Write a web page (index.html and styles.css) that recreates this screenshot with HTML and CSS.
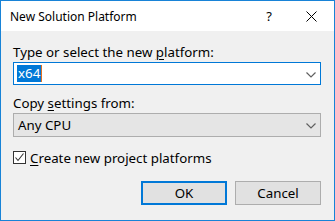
FILE: index.html
```html
<!DOCTYPE html>
<html>
<head>
<meta charset="utf-8">
<link rel="stylesheet" href="styles.css">
</head>
<body>
<div class="window">
  <div class="titlebar">
    <span class="title">New Solution Platform</span>
    <span class="help">?</span>
    <span class="close">
      <svg width="11" height="11" viewBox="0 0 11 11"><path d="M0.5 0.5 L10.5 10.5 M10.5 0.5 L0.5 10.5" stroke="#000" stroke-width="1" fill="none"/></svg>
    </span>
  </div>
  <div class="content">
    <div class="label label-first">Type or select the new <u>p</u>latform:</div>
    <div class="combo combo-edit">
      <span class="sel">x64</span><span class="caret"></span>
      <svg class="chev" width="10" height="6" viewBox="0 0 10 6"><path d="M0.5 0.5 L5 5 L9.5 0.5" stroke="#606060" stroke-width="1.2" fill="none"/></svg>
    </div>
    <div class="label label-second">Copy <u>s</u>ettings from:</div>
    <div class="combo combo-drop">
      <span class="val">Any CPU</span>
      <svg class="chev" width="10" height="6" viewBox="0 0 10 6"><path d="M0.5 0.5 L5 5 L9.5 0.5" stroke="#606060" stroke-width="1.2" fill="none"/></svg>
    </div>
    <div class="check-row">
      <span class="checkbox">
        <svg width="11" height="11" viewBox="0 0 11 11"><path d="M1.5 5.5 L4 8.5 L9.5 1.5" stroke="#333" stroke-width="1.1" fill="none"/></svg>
      </span>
      <span class="check-label"><u>C</u>reate new project platforms</span>
    </div>
    <div class="buttons">
      <button class="btn btn-default">OK</button>
      <button class="btn">Cancel</button>
    </div>
  </div>
</div>
</body>
</html>
```
FILE: styles.css
```css
* { box-sizing: border-box; }
html, body { margin: 0; padding: 0; }
body {
  width: 335px;
  height: 221px;
  font-family: "Noto Sans", "Open Sans", sans-serif;
  font-size: 12px;
  color: #000;
  background: #fff;
}
.window {
  width: 335px;
  height: 221px;
  border: 1px solid #1883d7;
  background: #f0f0f0;
  display: flex;
  flex-direction: column;
}
.titlebar {
  height: 30px;
  background: #fff;
  display: flex;
  align-items: center;
  padding-left: 9px;
  flex: none;
}
.title { flex: 1; font-size: 12px; }
.help { width: 12px; margin-right: 31px; text-align: center; font-size: 13px; }
.close { width: 11px; margin-right: 17px; display: flex; }
.content {
  padding: 0 13px 0 12px;
  display: flex;
  flex-direction: column;
  font-size: 13.3px;
}
.label { height: 15px; line-height: 15px; }
.label-first { margin-top: 14px; margin-bottom: 2px; }
.label-second { margin-top: 11px; margin-bottom: 2px; }
u { text-decoration-thickness: 1px; text-underline-offset: 2px; }
.combo {
  height: 23px;
  display: flex;
  align-items: center;
  position: relative;
}
.combo-edit {
  border: 1px solid #0078d7;
  background: #fff;
  padding-left: 3px;
}
.sel {
  background: #0078d7;
  color: #fff;
  height: 17px;
  line-height: 17px;
  padding: 0 1px;
}
.caret {
  width: 1px;
  height: 17px;
  background: #e07020;
}
.chev { position: absolute; right: 4px; top: 9px; }
.combo-drop {
  height: 24px;
  border: 1px solid #adadad;
  background: #e5e5e5;
  padding-left: 4px;
}
.combo-drop .chev { top: 9px; }
.check-row {
  display: flex;
  align-items: center;
  margin-top: 14px;
  height: 13px;
}
.checkbox {
  width: 13px;
  height: 13px;
  border: 1px solid #333;
  background: #fff;
  display: flex;
  align-items: center;
  justify-content: center;
  margin-right: 4px;
}
.buttons {
  display: flex;
  justify-content: flex-end;
  gap: 8px;
  margin-top: 17px;
}
.btn {
  width: 86px;
  height: 24px;
  border: 1px solid #adadad;
  background: #e1e1e1;
  font-family: inherit;
  font-size: 13.3px;
  color: #000;
  padding: 0;
}
.btn-default { border: 2px solid #0078d7; }
```
